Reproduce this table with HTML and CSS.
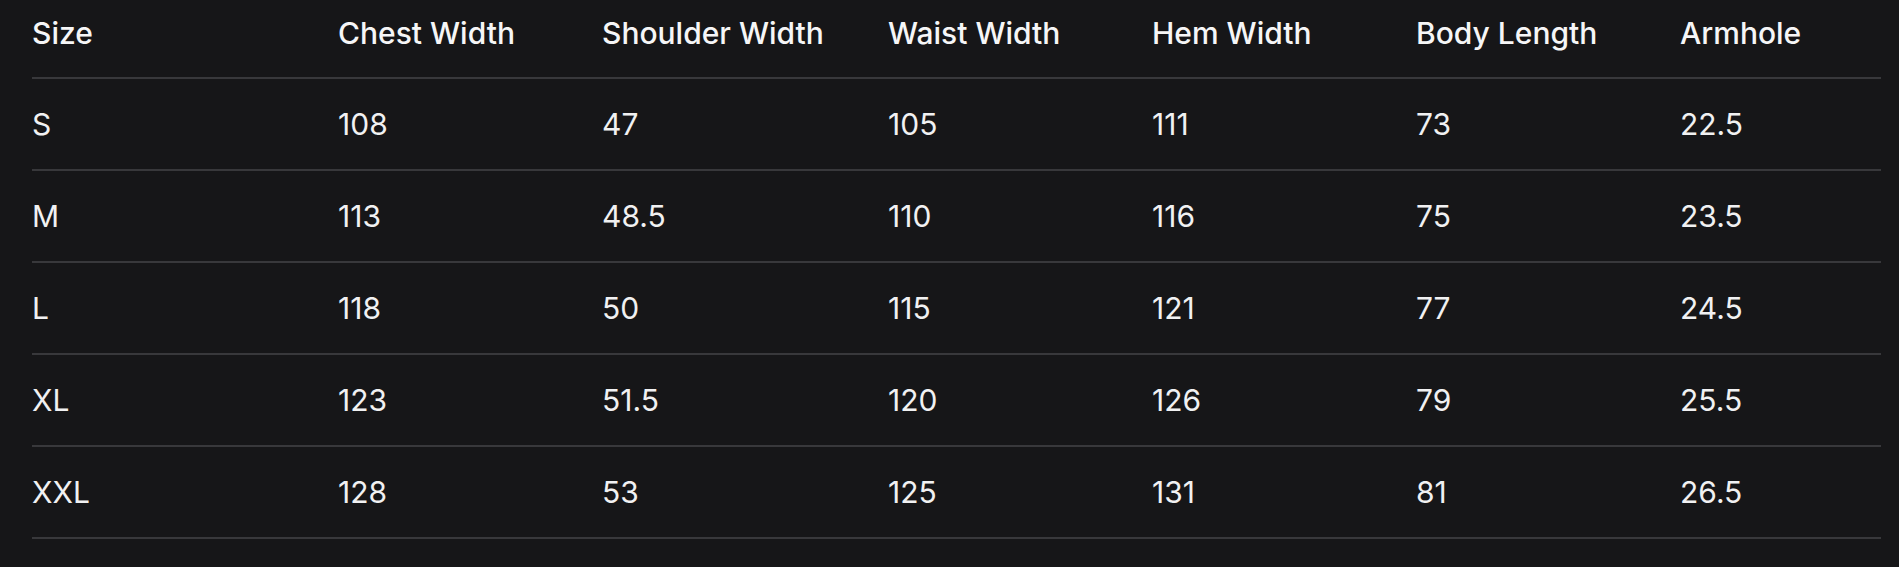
FILE: index.html
```html
<!DOCTYPE html>
<html lang="en">
<head>
<meta charset="utf-8">
<title>Size Chart</title>
<link rel="stylesheet" href="styles.css">
</head>
<body>
<div class="wrap">
<table class="chart">
  <thead>
    <tr>
      <th class="c-size">Size</th>
      <th class="c-std">Chest Width</th>
      <th class="c-wide">Shoulder Width</th>
      <th class="c-std">Waist Width</th>
      <th class="c-std">Hem Width</th>
      <th class="c-std">Body Length</th>
      <th class="c-last">Armhole</th>
    </tr>
  </thead>
  <tbody>
    <tr><td>S</td><td>108</td><td>47</td><td>105</td><td>111</td><td>73</td><td>22.5</td></tr>
    <tr><td>M</td><td>113</td><td>48.5</td><td>110</td><td>116</td><td>75</td><td>23.5</td></tr>
    <tr><td>L</td><td>118</td><td>50</td><td>115</td><td>121</td><td>77</td><td>24.5</td></tr>
    <tr><td>XL</td><td>123</td><td>51.5</td><td>120</td><td>126</td><td>79</td><td>25.5</td></tr>
    <tr><td>XXL</td><td>128</td><td>53</td><td>125</td><td>131</td><td>81</td><td>26.5</td></tr>
  </tbody>
</table>
</div>
</body>
</html>
```
FILE: styles.css
```css
html, body {
  margin: 0;
  padding: 0;
  background: #161618;
}
body {
  font-family: Inter, "Noto Sans", "Liberation Sans", sans-serif;
  color: #f4f4f5;
}
.wrap {
  padding: 0 18px 0 32px;
}
.chart {
  width: 1849px;
  border-collapse: collapse;
  table-layout: fixed;
  font-size: 30px;
  line-height: 36px;
}
.chart th,
.chart td {
  box-sizing: border-box;
}
.chart th {
  text-align: left;
  font-weight: 500;
  padding: 15px 0 26px 0;
  border-bottom: 2px solid #38383b;
  color: #f6f6f7;
}
.chart td {
  padding: 27px 0 27px 0;
  border-bottom: 2px solid #38383b;
  font-weight: 400;
  color: #f1f1f2;
}
.c-size { width: 306px; }
.c-std { width: 264px; }
.c-wide { width: 286px; }
.c-last { width: 201px; }
```
